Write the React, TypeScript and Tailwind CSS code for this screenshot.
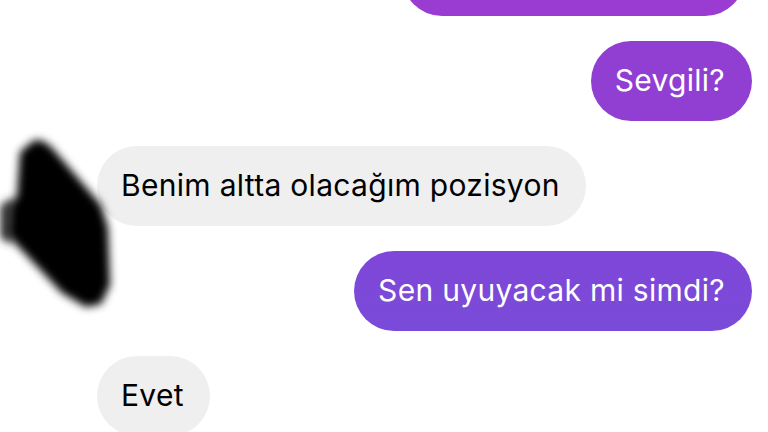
import React from "react";

function Out({ text, cls }: { text: string; cls: string }) {
  return (
    <div className="flex justify-end">
      <div className={`h-[80px] rounded-full pl-[24px] pr-[27px] pb-[2px] flex items-center text-white ${cls}`}>
        {text}
      </div>
    </div>
  );
}

function In({ text }: { text: string }) {
  return (
    <div className="flex justify-start">
      <div className="h-[80px] rounded-full pl-[24px] pr-[26px] pb-[2px] flex items-center text-black bg-[#efefef]">
        {text}
      </div>
    </div>
  );
}

export default function App() {
  return (
    <div
      className="relative w-[768px] h-[432px] overflow-hidden bg-white text-[30px] tracking-[0.3px]"
      style={{ fontFamily: "Inter, 'Noto Sans', sans-serif" }}
    >
      <div className="flex flex-col gap-[25px] pl-[97px] pr-[16px] mt-[-64px]">
        <div className="flex justify-end">
          <div className="h-[80px] w-[343px] rounded-[40px] bg-[#9a3cd1] mr-[7px]" />
        </div>
        <Out text="Sevgili?" cls="bg-[#913fd3]" />
        <In text="Benim altta olacağım pozisyon" />
        <Out text="Sen uyuyacak mi simdi?" cls="bg-gradient-to-b from-[#7f46d9] to-[#7a4bd8]" />
        <In text="Evet" />
      </div>
      <svg
        className="absolute left-0 top-0"
        width="130"
        height="330"
        viewBox="0 0 130 330"
      >
        <defs>
          <filter id="blur" x="-30%" y="-30%" width="160%" height="160%">
            <feGaussianBlur stdDeviation="4.5" />
          </filter>
        </defs>
        <path
          d="M 0 205 L 14 198 L 12 244 L 0 238 Z"
          fill="#3a3a3a"
          filter="url(#blur)"
        />
        <path
          d="M 33 141 Q 42 137 54 150 L 101 205 L 108 228 L 110 285 L 101 304 L 86 307 L 62 293 L 14 242 L 8 235 L 10 205 L 17 196 L 20 152 Z"
          fill="#000"
          filter="url(#blur)"
        />
      </svg>
    </div>
  );
}
